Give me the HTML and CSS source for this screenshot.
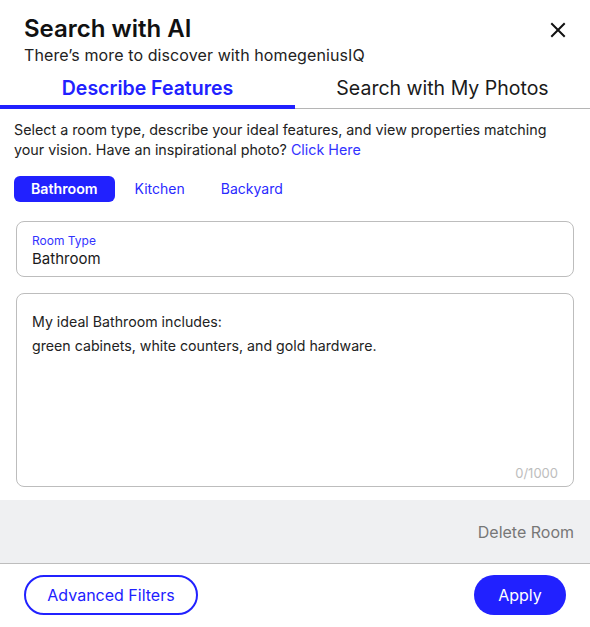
FILE: index.html
```html
<!DOCTYPE html>
<html>
<head>
<meta charset="utf-8">
<link rel="stylesheet" href="styles.css">
</head>
<body>
<div class="modal">
  <div class="header">
    <div class="title-row">
      <h1 class="title">Search with AI</h1>
      <button class="close" aria-label="Close">
        <svg width="16" height="16" viewBox="0 0 16 16"><path d="M2 2L14 14M14 2L2 14" stroke="#111" stroke-width="2" stroke-linecap="square"/></svg>
      </button>
    </div>
    <p class="subtitle">There’s more to discover with homegeniusIQ</p>
  </div>
  <div class="tabs">
    <div class="tab active">Describe Features</div>
    <div class="tab">Search with My Photos</div>
  </div>
  <div class="content">
    <p class="intro">Select a room type, describe your ideal features, and view properties matching your vision. Have an inspirational photo? <a class="link">Click Here</a></p>
    <div class="chips">
      <span class="chip selected">Bathroom</span>
      <span class="chip">Kitchen</span>
      <span class="chip">Backyard</span>
    </div>
    <div class="field">
      <div class="field-label">Room Type</div>
      <div class="field-value">Bathroom</div>
    </div>
    <div class="textarea">
      <div class="ta-text">
        <div>My ideal Bathroom includes:</div>
        <div>green cabinets, white counters, and gold hardware.</div>
      </div>
      <div class="counter">0/1000</div>
    </div>
  </div>
  <div class="gray-bar">
    <span class="delete">Delete Room</span>
  </div>
  <div class="footer">
    <button class="btn-outline">Advanced Filters</button>
    <button class="btn-primary">Apply</button>
  </div>
</div>
</body>
</html>
```

FILE: styles.css
```css
* { box-sizing: border-box; }
html, body { margin: 0; padding: 0; background: #fff; }
body {
  font-family: Inter, "Noto Sans", sans-serif;
  color: #1a1a1a;
  width: 590px;
  height: 627px;
  overflow: hidden;
}
.modal { display: flex; flex-direction: column; }
.header { padding: 15px 24px 0 24px; }
.title-row { display: flex; justify-content: space-between; align-items: center; }
.title { margin: 0; font-size: 24px; font-weight: 600; line-height: 28px; color: #111; letter-spacing: 0; }
.close { border: 0; background: none; padding: 0; margin-right: 0; width: 16px; height: 16px; display: flex; margin-top: 2px; }
.subtitle { margin: 2px 0 0 0; font-size: 16px; line-height: 20px; color: #222; letter-spacing: 0.1px; }
.tabs { display: flex; margin-top: 11px; border-bottom: 1px solid #b5b5b5; }
.tab { flex: 1; text-align: center; font-size: 19.5px; line-height: 24px; padding-bottom: 5px; color: #1a1a1a; border-bottom: 4px solid transparent; margin-bottom: -1px; }
.tab.active { color: #2121ff; font-weight: 600; border-bottom-color: #2121ff; }
.content { padding: 0 16px 13px 16px; }
.intro { margin: 11px 0 0 -2px; font-size: 14.3px; line-height: 20px; color: #222; padding-right: 20px; }
.link { color: #3333ff; }
.chips { display: flex; gap: 0; margin-top: 16px; margin-left: -2px; align-items: center; }
.chip { font-size: 14px; line-height: 26px; padding: 0 16px; color: #2a2aff; margin-right: 4px; }
.chip.selected { background: #2121ff; color: #fff; font-weight: 600; border-radius: 6px; padding: 0 17px; font-size: 14.2px; }
.field { margin-top: 19px; border: 1px solid #bdbdbd; border-radius: 8px; padding: 11px 15px 11px 15px; height: 56px; }
.field-label { font-size: 12px; line-height: 15px; color: #3333ff; }
.field-value { font-size: 15px; line-height: 20px; color: #1a1a1a; margin-top: 1px; }
.textarea { margin-top: 16px; border: 1px solid #bdbdbd; border-radius: 8px; height: 194px; padding: 16px 15px 6px 15px; display: flex; flex-direction: column; justify-content: space-between; }
.ta-text { font-size: 14.2px; line-height: 24px; color: #222; }
.counter { align-self: flex-end; font-size: 13px; line-height: 16px; color: #bdbdbd; margin-bottom: -1px; }
.gray-bar { background: #eff0f2; height: 64px; border-bottom: 1px solid #bdbdbd; display: flex; align-items: center; justify-content: flex-end; padding: 0 16px; }
.delete { font-size: 16px; color: #777; margin-top: 0; }
.footer { display: flex; justify-content: space-between; align-items: center; padding: 11px 24px 0 24px; }
button { font-family: inherit; }
.btn-outline { border: 2px solid #2121ff; background: #fff; color: #2121ff; border-radius: 20px; height: 40px; width: 174px; font-size: 16px; }
.btn-primary { border: 0; background: #2121ff; color: #fff; border-radius: 20px; height: 40px; width: 92px; font-size: 16px; }
```
